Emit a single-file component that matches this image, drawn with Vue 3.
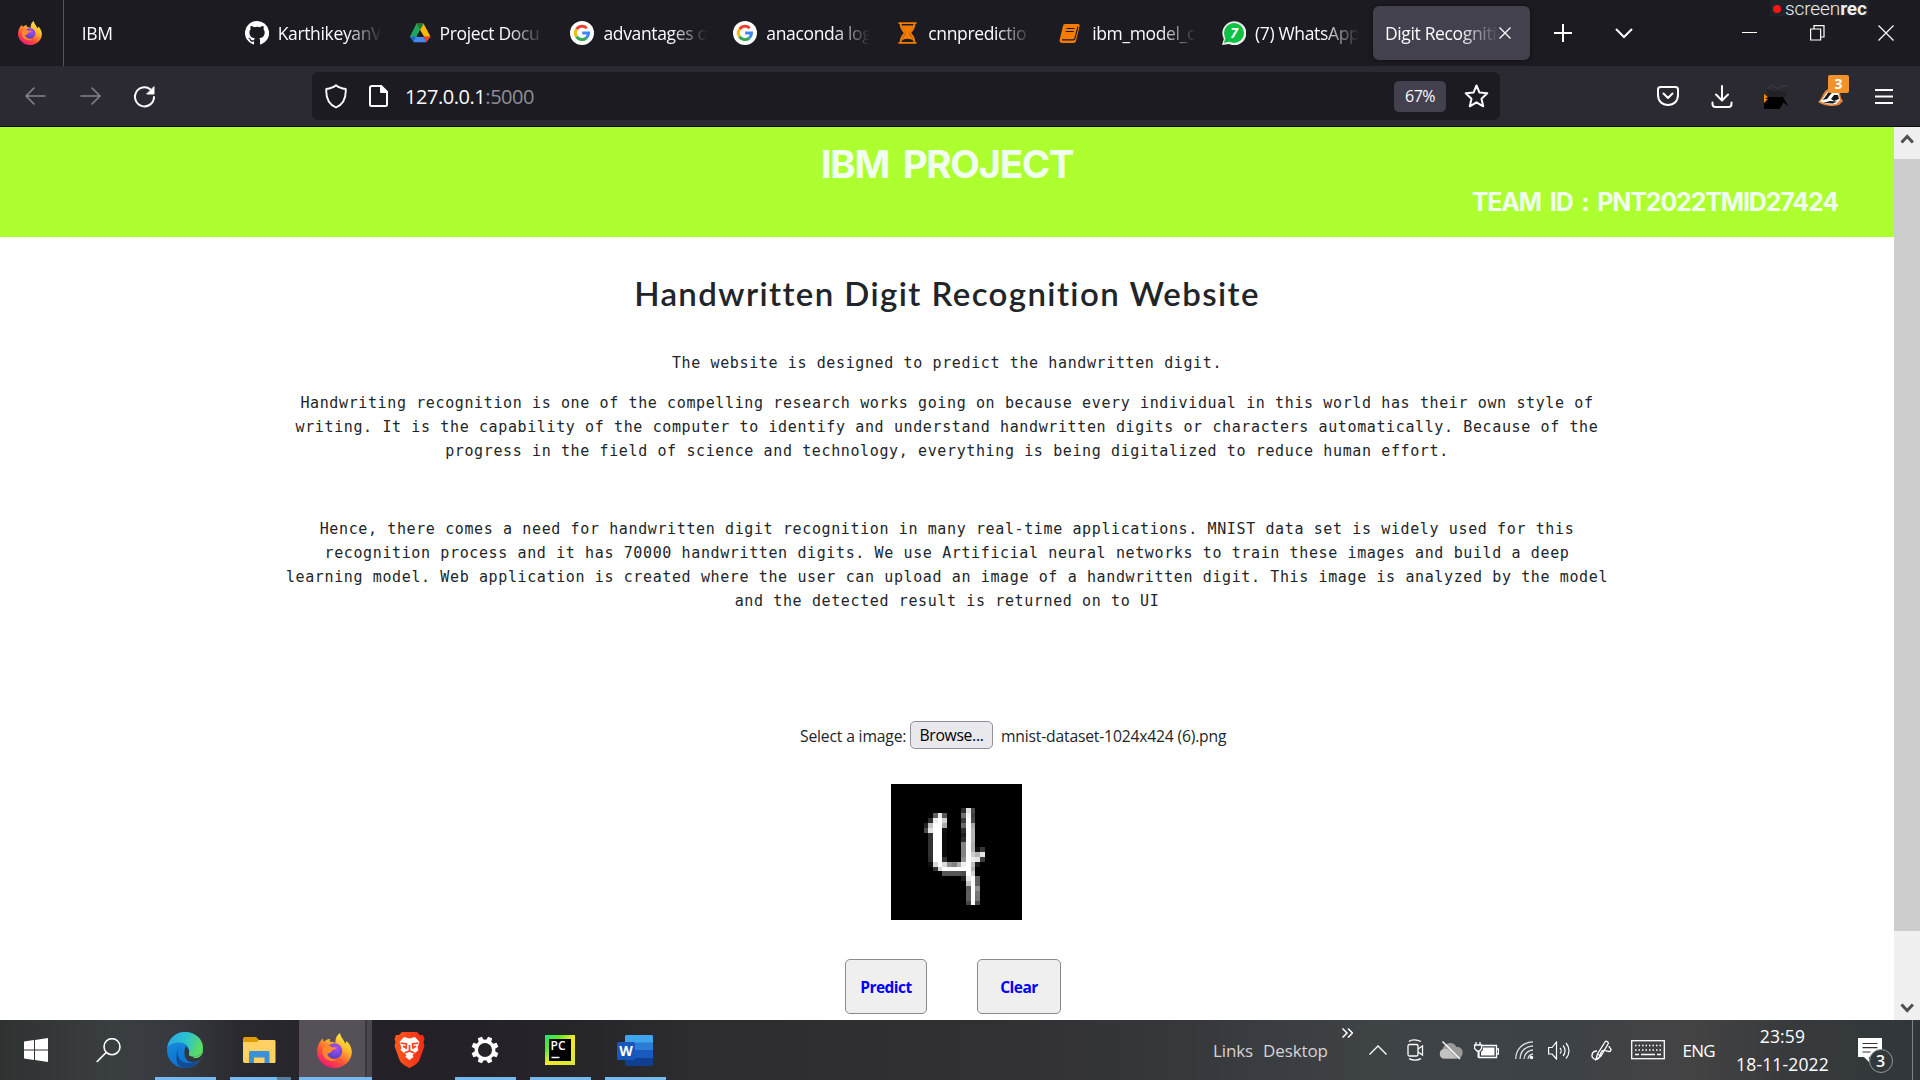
<script setup>
const tabs = [
  { icon: 'none', label: 'IBM' },
  { icon: 'github', label: 'KarthikeyanV' },
  { icon: 'drive', label: 'Project Docu' },
  { icon: 'google', label: 'advantages o' },
  { icon: 'google', label: 'anaconda log' },
  { icon: 'hourglass', label: 'cnnpredictio' },
  { icon: 'book', label: 'ibm_model_c' },
  { icon: 'whatsapp', label: '(7) WhatsApp' },
]

// Rows of the 28x28 digit: [row, first column, grey levels...]
const strokes = [
  [5, 15, 45, 225, 75],
  [6, 9, 95, 235, 90], [6, 15, 110, 245, 65],
  [7, 8, 45, 235, 255, 210], [7, 15, 60, 255, 75],
  [8, 7, 35, 195, 255, 255, 170], [8, 15, 105, 255, 165],
  [9, 7, 75, 225, 255, 255, 15], [9, 15, 45, 255, 180],
  [10, 8, 50, 255, 255, 10], [10, 15, 30, 255, 180],
  [11, 8, 50, 255, 255, 10], [11, 15, 45, 255, 180],
  [12, 8, 50, 255, 255, 10], [12, 15, 130, 255, 175],
  [13, 8, 50, 255, 255, 10], [13, 15, 130, 255, 175, 15, 55],
  [14, 8, 50, 255, 255, 10], [14, 15, 130, 255, 205, 180, 230],
  [15, 8, 45, 255, 255, 50], [15, 15, 145, 255, 235, 225, 60],
  [16, 8, 15, 215, 255, 220, 145, 130, 175, 240, 255, 190, 25],
  [17, 9, 50, 215, 255, 255, 255, 255, 255, 255, 175],
  [18, 11, 85, 85, 85, 85, 75, 255, 210],
  [19, 15, 30, 235, 255, 95],
  [20, 16, 195, 255, 95],
  [21, 16, 90, 255, 145],
  [22, 16, 95, 255, 120],
  [23, 16, 95, 255, 115],
  [24, 16, 70, 255, 75],
]
const pixels = strokes.flatMap(([y, x, ...levels]) =>
  levels.map((g, i) => ({ x: x + i, y, fill: `rgb(${g},${g},${g})` })))
</script>

<template>
  <svg width="0" height="0" class="defs">
    <defs>
      <linearGradient id="ffBody" x1=".85" y1=".05" x2=".25" y2="1">
        <stop offset="0" stop-color="#fff44f" /><stop offset=".35" stop-color="#ffb52b" />
        <stop offset=".65" stop-color="#ff5634" /><stop offset="1" stop-color="#f4107c" />
      </linearGradient>
      <radialGradient id="ffGlobe" cx=".6" cy=".3" r=".7">
        <stop offset="0" stop-color="#b74cf2" /><stop offset="1" stop-color="#4b45c8" />
      </radialGradient>
      <linearGradient id="edgeTop" x1="0" y1=".3" x2="1" y2=".6">
        <stop offset="0" stop-color="#29a8e0" /><stop offset=".5" stop-color="#2cc3cd" /><stop offset="1" stop-color="#64de55" />
      </linearGradient>
      <linearGradient id="edgeLow" x1="0" y1="0" x2=".4" y2="1">
        <stop offset="0" stop-color="#1b93df" /><stop offset="1" stop-color="#0a6fd0" />
      </linearGradient>
      <linearGradient id="braveFill"><stop offset="0" stop-color="#ff5a1c" /><stop offset="1" stop-color="#f32a17" /></linearGradient>
      <linearGradient id="pcFill" x1="0" y1="0" x2="1" y2="1">
        <stop offset="0" stop-color="#21e67b" /><stop offset=".25" stop-color="#55e82c" /><stop offset=".5" stop-color="#f2ea25" /><stop offset="1" stop-color="#d8e82f" />
      </linearGradient>
      <symbol id="firefox" viewBox="0 0 34 34">
        <path d="M3 8.5C4 7 4.7 6.100 5.700 5.400C5.600 7 6.200 7.800 7.200 8.300C9 6.700 11 6 12.500 5.700L12.300 8.300C14 8.500 16 9.200 18 9.500C17.500 5 19.500 2 22.500 0C22.500 4 26 6 27.500 10.500C28.200 9.300 28.500 8.600 28.500 7.800C32 10.500 34 15 33.800 19C33.500 27.500 26 34 17 34C8 34 .5 27.500 0 18.500C-.1 15 1 11 3 8.500Z" fill="url(#ffBody)" />
        <circle cx="17" cy="17.500" r="7.500" fill="url(#ffGlobe)" />
        <path d="M5.500 14C8 12 12 12 14.500 13.800L19 14.200C18.500 16 15.500 16.600 14.500 17C13.500 19.500 10.500 20.500 9.700 20C10 24 15 27 20 25C17 29 8 28 5.500 20Z" fill="#ff8a2b" />
      </symbol>
      <symbol id="google" viewBox="0 0 24 24">
        <circle cx="12" cy="12" r="12" fill="#fff" />
        <g fill="none" stroke-width="3">
          <path d="M6.500 8.300A6.600 6.600 0 0 1 16.700 7.200" stroke="#ea4335" />
          <path d="M6.500 15.600A6.600 6.600 0 0 1 6.500 8.300" stroke="#fbbc05" />
          <path d="M16.300 17A6.600 6.600 0 0 1 6.500 15.600" stroke="#34a853" />
          <path d="M12.200 12H18.500A6.600 6.600 0 0 1 16.300 17" stroke="#4285f4" />
        </g>
      </symbol>
    </defs>
  </svg>

  <div class="screen">
    <header class="tabstrip">
      <div class="pinned"><svg width="24" height="24"><use href="#firefox" /></svg></div>
      <div v-for="(t, i) in tabs" :key="i" class="tab" :class="t.icon">
        <svg v-if="t.icon === 'github'" class="fav" viewBox="0 0 16 16"><path fill="#fff" d="M8 0a8 8 0 0 0-2.530 15.590c.4.070.55-.17.55-.38v-1.490c-2.010.37-2.530-.49-2.690-.94-.09-.23-.48-.94-.82-1.130-.28-.15-.68-.52-.01-.53.630-.01 1.080.580 1.230.820.720 1.210 1.870.870 2.330.660.070-.52.280-.87.510-1.070-1.780-.2-3.640-.89-3.640-3.950 0-.87.310-1.590.820-2.150-.08-.2-.36-1.020.080-2.120 0 0 .67-.21 2.200.820a7.400 7.400 0 0 1 4 0c1.530-1.040 2.200-.82 2.200-.82.440 1.100.160 1.920.080 2.120.510.560.820 1.270.820 2.150 0 3.070-1.870 3.750-3.650 3.950.290.250.540.730.540 1.480v2.200c0 .21.150.460.550.380A8 8 0 0 0 8 0Z" /></svg>
        <svg v-else-if="t.icon === 'drive'" class="fav" viewBox="0 0 24 24"><path d="M8 2H16L6 22L1 16Z" fill="#1fa463" /><path d="M8 2h8l7.500 14h-7Z" fill="#fdb900" /><path d="M8 2h8l-4 7Z" fill="#188038" /><path d="M1 16h6.500L5 22Z" fill="#1967d2" /><path d="M5 22l3-6h8l3 6Z" fill="#4688f4" /><path d="M16 16h7.500L19 22Z" fill="#ea4335" /><path d="M12 9l4 7H8Z" fill="#1d1b22" /></svg>
        <svg v-else-if="t.icon === 'google'" class="fav"><use href="#google" /></svg>
        <svg v-else-if="t.icon === 'hourglass'" class="fav" viewBox="0 0 19 24" fill="none" stroke="#f57c00" stroke-width="1.800"><path d="M.5 2.200h18M.5 21.800h18M2.500 2c0 6 2 7 4.500 10C4.500 15 2.500 16 2.500 22M16.500 2c0 6-2 7-4.500 10C14.500 15 16.500 16 16.500 22" /><path d="M3.500 4.500h12c-1 4-3 5.500-4.500 7.500C12.500 15 14.500 16 15.500 20c-3-3-9-3-12 0C4.500 16 6.500 15 8 12 6.500 10 4.500 8.500 3.500 4.500Z" fill="#f57c00" stroke="none" /></svg>
        <svg v-else-if="t.icon === 'book'" class="fav" viewBox="0 0 22 24"><path d="M6 3h13c1.500 0 2 1 1.600 2.300L17 20c-.4 1.300-1 2-2.500 2H3.500c-2.500 0-3.500-1.500-2.800-3.500L4 5C4.300 3.700 4.800 3 6 3Z" fill="#f57c00" /><path d="M7.500 7.500h8M6.700 10.500h8M3 18.800h11.500c.8 0 1.200-.4 1.400-1.200L19 5.500" fill="none" stroke="#1d1b22" stroke-width="1.200" /></svg>
        <svg v-else-if="t.icon === 'whatsapp'" class="fav" viewBox="0 0 24 24"><path d="M0 24L1.800 18A12 12 0 1 1 7 23Z" fill="#eee" /><circle cx="12" cy="12" r="10" fill="#0cc143" /><path d="M2 22l1.600-5.500 4 4Z" fill="#0cc143" /><text x="12" y="17" text-anchor="middle" class="wa-count">7</text></svg>
        <span class="tab-label">{{ t.label }}</span>
      </div>
      <div class="tab active"><span class="tab-label">Digit Recogniti</span>
        <svg width="12" height="12" viewBox="0 0 12 12" fill="none" stroke="#fff" stroke-width="1.300"><path d="M.5 .5l11 11M11.500 .5l-11 11" /></svg>
      </div>
      <svg class="plus" width="18" height="18" fill="none" stroke="#fff" stroke-width="2"><path d="M9 0v18M0 9h18" /></svg>
      <svg class="list" width="18" height="11" fill="none" stroke="#fff" stroke-width="2"><path d="M1 1l8 8 8-8" /></svg>
      <svg class="minimise" width="15" height="16" stroke="#fff"><path d="M0 7.500h15" /></svg>
      <svg class="restore" width="15" height="16" fill="none" stroke="#fff" stroke-width="1.200"><path d="M.6 4h10v11H.6ZM4 4V.6h10v11.400h-3.400" /></svg>
      <svg class="close" width="16" height="16" fill="none" stroke="#fff" stroke-width="1.200"><path d="M.5 .5l15 15M15.500 .5l-15 15" /></svg>
      <div class="screenrec"><i></i><span>screen<b>rec</b></span></div>
    </header>

    <nav class="toolbar">
      <svg class="back" width="21" height="20" fill="none" stroke="#85848b" stroke-width="1.600" stroke-linecap="round" stroke-linejoin="round"><path d="M20 10H1M9 2L1 10l8 8" /></svg>
      <svg class="forward" width="21" height="20" fill="none" stroke="#85848b" stroke-width="1.600" stroke-linecap="round" stroke-linejoin="round"><path d="M1 10h19M12 2l8 8-8 8" /></svg>
      <svg class="reload" width="23" height="23" fill="none" stroke="#fbfbfe" stroke-width="2" stroke-linecap="round"><path d="M21 12A9.500 9.500 0 1 1 17.500 4.500" /><path d="M21 2v7h-7Z" fill="#fbfbfe" stroke-width="1" stroke-linejoin="round" /></svg>
      <div class="urlbar">
        <svg class="shield" width="22" height="25" fill="none" stroke="#fbfbfe" stroke-width="1.900" stroke-linejoin="round"><path d="M11 1.300C13.500 3.500 17 4.600 20.700 5C21.200 13.500 18 20.500 11 23.500C4 20.500.8 13.500 1.300 5C5 4.600 8.500 3.500 11 1.300Z" /></svg>
        <svg class="page" width="19" height="22" fill="none" stroke="#fbfbfe" stroke-width="2" stroke-linejoin="round"><path d="M3 1h9l6 6v12.500c0 1-.5 1.500-1.500 1.500H2.500C1.500 21 1 20.500 1 19.500V2.500C1 1.500 1.500 1 3 1Z" /><path d="M12 1v6h6Z" fill="#fbfbfe" /></svg>
        <span class="url">127.0.0.1<em>:5000</em></span>
        <span class="zoom">67%</span>
        <svg class="star" width="25" height="24" fill="none" stroke="#fbfbfe" stroke-width="2" stroke-linejoin="round"><path d="M12.500 1.500L15.500 8.600L23.300 9.300L17.500 14.700L19.200 22.300L12.500 18.300L5.800 22.300L7.500 14.700L1.700 9.300L9.500 8.600Z" /></svg>
      </div>
      <svg class="pocket" width="22" height="20" fill="none" stroke="#fbfbfe" stroke-width="2" stroke-linecap="round" stroke-linejoin="round"><path d="M3.500 1h15C20 1 21 2 21 3.500V9C21 15 17 19 11 19S1 15 1 9V3.500C1 2 2 1 3.500 1ZM6.500 7.500L11 12l4.500-4.500" /></svg>
      <svg class="download" width="22" height="23" fill="none" stroke="#fbfbfe" stroke-width="2" stroke-linecap="round" stroke-linejoin="round"><path d="M11 1v14M5 9.500l6 6 6-6M1.500 17.500V19c0 2 1 3 3 3h13c2 0 3-1 3-3v-1.500" /></svg>
      <svg class="ext" width="25" height="25"><path d="M0 10l5 4-5 7Z" fill="#ff8a00" /><path d="M3 5l4 2h8l8 1-3 6H4Z" fill="#222125" /><path d="M1 15l3-2h15l5.500 9.500-5-4-4 6.500H0v-6l4-4Z" fill="#000" /><path d="M4 5c5-7 8 1 11-1s5-3 8-2" stroke="#3a393f" stroke-width="1.400" fill="none" /></svg>
      <div class="badger">
        <svg width="25" height="20" viewBox="0 0 25 20"><path d="M0 16C5 12 4 6 10 3l3-3 1 4c4-1 7 0 8 3l1 5 2 3-4 4c-7 2-15 1-21-3Z" fill="#e98532" /><path d="M2 15C7 12 6 8 11 5c5-2 9 0 10 4l1 5-4 4c-6 1-11 0-16-3Z" fill="#fff" /><path d="M4 14c3-1 4-6 8-9l3 1c-3 2-4 5-6 7Zm9-1l3-4 4 0 1 4-5 2Zm-8 4l7-2 7 .5-4 2Z" fill="#171717" /></svg>
        <b>3</b>
      </div>
      <svg class="menu" width="18" height="17" stroke="#fbfbfe" stroke-width="2"><path d="M0 2h18M0 8.500h18M0 15h18" /></svg>
    </nav>

    <div class="viewport">
      <main>
        <section class="banner"><h1>IBM PROJECT</h1><h4>TEAM ID : PNT2022TMID27424</h4></section>
        <h2>Handwritten Digit Recognition Website</h2>
        <p class="lead">The website is designed to predict the handwritten digit.</p>
        <p class="first">Handwriting recognition is one of the compelling research works going on because every individual in this world has their own style of<br>writing. It is the capability of the computer to identify and understand handwritten digits or characters automatically. Because of the<br>progress in the field of science and technology, everything is being digitalized to reduce human effort.</p>
        <p class="second">Hence, there comes a need for handwritten digit recognition in many real-time applications. MNIST data set is widely used for this<br>recognition process and it has 70000 handwritten digits. We use Artificial neural networks to train these images and build a deep<br>learning model. Web application is created where the user can upload an image of a handwritten digit. This image is analyzed by the model<br>and the detected result is returned on to UI</p>
        <div class="picker"><span class="pick-label">Select a image:</span><button class="browse"><span>Browse...</span></button><span class="filename">mnist-dataset-1024x424 (6).png</span></div>
        <svg class="digit" width="131" height="136" viewBox="0 0 28 28" preserveAspectRatio="none" shape-rendering="crispEdges">
          <rect width="28" height="28" fill="#000" />
          <rect v-for="p in pixels" :key="p.x + '-' + p.y" :x="p.x" :y="p.y" width="1" height="1" :fill="p.fill" />
        </svg>
        <div class="actions"><button class="predict">Predict</button><button class="clear">Clear</button></div>
      </main>
      <aside class="scrollbar">
        <svg width="26" height="32" fill="none" stroke="#505050" stroke-width="3"><path d="M7.500 15.500l5.700-6 5.700 6" /></svg>
        <div class="thumb"></div>
        <svg width="26" height="30" fill="none" stroke="#505050" stroke-width="3"><path d="M7.500 14.500l5.700 6 5.700-6" /></svg>
      </aside>
    </div>

    <footer class="taskbar">
      <div class="slot start"><svg width="24" height="24" fill="#fff"><path d="M0 3.500l10-1.400v9.300H0ZM11 2l13-2v11.400H11ZM0 12.400h10v9.500L0 20.500ZM11 12.400h13V24l-13-1.900Z" /></svg></div>
      <div class="slot search"><svg width="25" height="25" fill="none" stroke="#fff" stroke-width="1.600"><circle cx="16" cy="8.700" r="8" /><path d="M10.300 14.400L.7 24" /></svg></div>
      <div class="slot run">
        <svg width="36" height="36"><circle cx="18" cy="18" r="18" fill="url(#edgeLow)" /><path d="M0 16C2 6 9 0 18 0c10 0 18 7 18 15.500C36 21 32 24.500 27 24.500c-3.500 0-5.500-1.500-5-3 2-6-3-11-9.500-11C7 10.500 2 12 0 16Z" fill="url(#edgeTop)" /><path d="M13 15c-5 6-1 16 8 16 5 0 9-2 12-4.500-4 6-9 9.500-15 9.500-7 0-9-6-8.500-12 .3-4 1.500-7 3.500-9Z" fill="#104c96" /><path d="M22 21.500c-.7 1.600 1 3.300 5 3.300 4 0 7-1.500 9-4.300L36 26l-2 1c-2.500 2-6 3.300-9.500 3C18 29.500 16 22 18.500 14.500 21 16 22.800 18.600 22 21.500Z" fill="#33363b" /><path d="M22 21.500c-.7 1.600 1 3 5 3 5 0 8.500-3 9-8l0 3c-1 5-5 7-9 6.500Z" fill="#5fd65c" /></svg>
      </div>
      <div class="slot run multi"><svg width="33" height="28"><path d="M0 3C0 1.500 1 1 2 1h11l3 3v5H0Z" fill="#df9b02" /><path d="M0 6h14l2-2h15c1 0 1.500.5 1.500 1.500v20c0 1-.5 1.500-1.500 1.500H2C.7 27 0 26.300 0 25Z" fill="#ffd162" /><path d="M6 27V17c0-1.500.7-2 2-2h16.500c1.300 0 2 .5 2 2v10h-5v-5.500H11V27Z" fill="#3a91d8" /></svg></div>
      <div class="slot run focus"><svg width="35" height="35"><use href="#firefox" /></svg></div>
      <div class="slot"><svg width="31" height="36" viewBox="0 0 31 36"><path d="M8 0h15l3 3h3l1.500 4-1 3 1 4-5 14c-1 3-6 6-10 8-4-2-9-5-10-8L.5 14l1-4-1-3L2 3h3Z" fill="url(#braveFill)" /><path d="M15.500 6.500L21 5l4.500 5-2 6 1 2-6 5 1 2-4 3-4-3 1-2-6-5 1-2-2-6L10 5Z" fill="#fff" /><path d="M6.500 11l6 1-.5 4-3-2M24.500 11l-6 1 .5 4 3-2M10.500 21l5-2 5 2M15.500 13v6" stroke="#f9411b" stroke-width="1.700" fill="none" /></svg></div>
      <div class="slot run"><svg width="28" height="28" viewBox="-14 -14 28 28"><circle r="8.700" fill="none" stroke="#fff" stroke-width="3.400" /><path v-for="n in 8" :key="n" d="M-2.800 -9L-2.200 -13.500H2.200L2.800 -9Z" fill="#fff" :transform="`rotate(${n * 45 - 22.5})`" /></svg></div>
      <div class="slot run"><svg width="30" height="30"><rect width="30" height="30" fill="url(#pcFill)" /><rect x="4" y="4" width="22" height="22" fill="#000" /><text x="5.500" y="15" class="pc">PC</text><path d="M6.500 22.500h8" stroke="#fff" stroke-width="1.500" /></svg></div>
      <div class="slot run"><svg width="36" height="33"><rect x="8" y="1" width="28" height="31" rx="2" fill="#103f91" /><path d="M8 24V3c0-1.300.7-2 2-2h24c1.300 0 2 .7 2 2v21Z" fill="#185abd" /><path d="M8 16V3c0-1.300.7-2 2-2h24c1.300 0 2 .7 2 2v13Z" fill="#2b7cd3" /><path d="M8 8.500V3c0-1.300.7-2 2-2h24c1.300 0 2 .7 2 2v5.500Z" fill="#41a5ee" /><rect y="8" width="18" height="18" rx="1.500" fill="#1856ba" /><text x="9" y="21.500" text-anchor="middle" class="word">W</text></svg></div>
      <div class="tray">
        <span class="links">Links</span><span class="desktop">Desktop</span>
        <svg class="more" width="11" height="10" fill="none" stroke="#fff" stroke-width="1.500"><path d="M.5 .5L5 5 .5 9.500M6 .5L10.500 5 6 9.500" /></svg>
        <svg class="up" width="18" height="10" fill="none" stroke="#fff" stroke-width="1.400"><path d="M.5 9.500L9 1l8.500 8.500" /></svg>
        <svg class="meet" width="17" height="22" fill="none" stroke="#fff" stroke-width="1.300"><rect x="1" y="5.500" width="10" height="11.500" rx="1.500" /><path d="M11 10l4.500-3v9L11 13M2 2.500C4 .3 10 .3 14 2.500M2 19.700c4 2 8 2 12 0" /></svg>
        <svg class="cloud" width="25" height="19"><path d="M5 17.500a5 5 0 0 1-.5-9C6 2 15-1 18.500 6c5-.5 7.500 4 5.500 8.500-1 2-2 3-4 3Z" fill="#999" /><path d="M5 17.500a5 5 0 0 1 .5-9.500c3-1 7 1.500 8 4l6 5.500Z" fill="#c2c2c2" /><path d="M4.500 .5L22 18" stroke="#fff" stroke-width="1.400" /></svg>
        <svg class="battery" width="25" height="17" fill="none" stroke="#fff" stroke-width="1.300"><path d="M5 10v5.500h17.500V3.500H8M23 7h1.500v5H23M2 0v3M6 0v3M.6 3h7v3.500L5.500 9H3L.6 6.500ZM4.200 9v6.500" /><path d="M9 5.500h11.500v8H7V10l2-2Z" fill="#fff" stroke="none" /></svg>
        <svg class="wifi" width="19" height="19" fill="none" stroke="#ddd" stroke-width="1.300"><path d="M.7 18C1 8 8 1 18 .8M5 18C5.500 10.500 10 5.500 18 5M9 18c.5-5 4-8.500 9-9M13 18c.3-2.500 2-4.500 5-5" /><circle cx="16.500" cy="16.500" r="1.800" fill="#fff" stroke="none" /></svg>
        <svg class="speaker" width="23" height="19" fill="none" stroke="#fff" stroke-width="1.200"><path d="M.6 6.500h3.500L8.500 1v17L4.100 13H.6ZM12 7c1.500 1.500 1.500 4 0 5.500M15 4.500c2.700 3 2.700 7.500 0 10.500M18 2c4 4.500 4 11 0 15.500" /></svg>
        <svg class="pen" width="21" height="21" fill="none" stroke="#fff" stroke-width="1.300"><path d="M5 19.500L6.500 14 14 2c1-1.500 4-.5 3 2L10 16ZM6.500 14l3.500 2M6 11c-6 0-7 8-1 8.500 5 0 3-5 6-8.500 2-2.500 8 3 9-1 .3-2-2-2-2-4" /></svg>
        <svg class="keyboard" width="34" height="20" fill="none" stroke="#fff" stroke-width="1.300"><rect x=".7" y=".7" width="32.600" height="18" /><path d="M4 5.500h27M4 10h27" stroke-dasharray="1.500 2" /><path d="M4 14.500h4M10 14.500h14M26 14.500h4" /></svg>
        <span class="lang">ENG</span>
        <div class="clock"><span class="time">23:59</span><span class="date">18-11-2022</span></div>
        <div class="notify"><svg width="24" height="25"><path d="M0 0h24v19H11v5l-5-5H0Z" fill="#fff" /><path d="M4.500 5.500h15M4.500 9.700h15M4.500 14h8" stroke="#333" stroke-width="1.200" /></svg><b>3</b></div>
        <div class="peek"></div>
      </div>
    </footer>
  </div>
</template>

<style>
body { margin: 0; overflow: hidden; }
</style>

<style scoped>
.defs { position: absolute; }
.screen { width: 1920px; height: 1080px; display: flex; flex-direction: column; overflow: hidden; background: #fff; font-family: "Open Sans", "Noto Sans", sans-serif; }
svg { display: block; flex: none; }
span { white-space: nowrap; }
button { font: inherit; padding: 0; box-sizing: border-box; }

.tabstrip { height: 66px; flex: none; display: flex; align-items: center; background: #1d1b22; color: #fbfbfe; position: relative; }
.pinned { width: 64px; height: 66px; border-right: 1px solid #55545b; display: flex; align-items: center; padding-left: 18px; box-sizing: border-box; }
.tab { width: 162.900px; height: 54px; flex: none; box-sizing: border-box; display: flex; align-items: center; padding-left: 17.800px; }
.fav { width: 24px; height: 24px; margin-right: 9px; }
.tab.drive .fav, .tab.book .fav { width: 22px; }
.tab.book .fav { margin-right: 11px; }
.tab.hourglass .fav { width: 19px; margin-left: 2px; margin-right: 11px; }
.tab.drive .fav { margin-left: 1px; }
.tab-label { width: 103px; font-size: 17.500px; letter-spacing: -0.350px; overflow: hidden; line-height: 28px; -webkit-mask-image: linear-gradient(90deg, #000 66%, transparent 101%); mask-image: linear-gradient(90deg, #000 66%, transparent 101%); }
.wa-count { font: italic bold 14px "Open Sans", sans-serif; fill: #fff; }
.tab.active { width: 157px; background: #42414d; border-radius: 6px; margin-left: 5.800px; padding-left: 12px; box-shadow: 0 0 4px #0008; }
.active .tab-label { width: 113px; margin-right: 1px; }
.plus { margin-left: 24px; }
.list { margin-left: 43px; }
.minimise { margin-left: 109px; }
.restore { margin-left: 53.500px; }
.close { margin-left: 53px; }
.screenrec { position: absolute; left: 1770px; top: 0; width: 99px; height: 16px; background: #20242a; display: flex; align-items: center; font: 300 19px/15px Roboto, sans-serif; color: #eee; letter-spacing: -0.100px; }
.screenrec i { width: 8px; height: 8px; flex: none; border-radius: 50%; background: #ff1414; margin: 1px 4px 0 3px; }
.screenrec b { font-weight: 700; }

.toolbar { height: 60px; flex: none; display: flex; align-items: center; background: #2b2a33; border-bottom: 1px solid #0c0c0d; color: #fbfbfe; }
.back { margin-left: 25px; }
.forward { margin-left: 34px; }
.reload { margin-left: 32px; }
.urlbar { width: 1188px; height: 48px; margin-left: 156px; background: #1c1b22; border-radius: 6px; display: flex; align-items: center; }
.shield { margin-left: 13px; }
.page { margin-left: 22px; }
.url { margin-left: 17px; width: 989px; font-size: 20px; letter-spacing: -0.450px; }
.url em { font-style: normal; color: #8f8e95; }
.zoom { width: 52px; height: 31px; line-height: 31px; border-radius: 5px; background: #42414d; text-align: center; font-size: 16px; letter-spacing: -0.500px; }
.star { margin-left: 18px; }
.pocket { margin-left: 157px; }
.download { margin-left: 32px; }
.ext { margin-left: 31px; }
.badger { margin-left: 29px; position: relative; }
.badger b { position: absolute; left: 10px; top: -11px; width: 21px; height: 18px; border-radius: 2px; background: #f0932b; font-size: 14px; line-height: 18px; text-align: center; }
.menu { margin-left: 32px; }

.viewport { height: 893px; flex: none; display: flex; overflow: hidden; }
main { width: 1894px; display: flex; flex-direction: column; align-items: center; color: #212529; }
.banner { width: 100%; height: 110px; flex: none; background: #adff2f; color: #f0fff0; display: flex; flex-direction: column; align-items: center; font-family: Inter, sans-serif; }
h1, h2, h4, p { margin: 0; white-space: nowrap; }
h1 { margin-top: 13px; font-size: 38.500px; line-height: 48px; font-weight: 700; letter-spacing: -1.350px; word-spacing: 6px; }
h4 { align-self: flex-end; margin: 0 56px 0 0; font-size: 25px; line-height: 29px; font-weight: 700; letter-spacing: -1.150px; word-spacing: 4px; }
h2 { margin-top: 36px; font: 600 33px/40px Lato, sans-serif; letter-spacing: 1.400px; }
p { font: 15px/24px "DejaVu Sans Mono", monospace; letter-spacing: 0.620px; text-align: center; }
.lead { margin-top: 38px; }
.first { margin-top: 16px; }
.second { margin-top: 54px; }
.picker { width: 1094px; margin-top: 108px; height: 28px; display: flex; align-items: center; align-self: flex-start; padding-left: 800px; font-size: 15.700px; box-sizing: content-box; }
.pick-label { width: 110px; padding-top: 2px; letter-spacing: -0.170px; }
.browse { width: 83px; height: 28px; flex: none; border: 1px solid #8f8f9d; border-radius: 5px; background: #e9e9ed; color: #000; line-height: 26px; letter-spacing: -0.300px; }
.filename { margin-left: 8px; padding-top: 2px; letter-spacing: -0.190px; }
.digit { margin: 35px 0 0 18px; }
.actions { align-self: flex-start; margin: 39px 0 0 845px; display: flex; gap: 50px; }
.actions button { width: 82px; height: 55px; border: 1px solid #8a8a8a; border-radius: 5px; background: #efefef; color: #00f; font-size: 15.500px; font-weight: 700; letter-spacing: -0.550px; padding-top: 1px; }
.actions .clear { width: 84px; }
.scrollbar { width: 26px; background: #f0f0f0; display: flex; flex-direction: column; justify-content: space-between; }
.thumb { flex: none; height: 772px; background: #cdcdcd; margin-bottom: auto; }

.taskbar { height: 60px; flex: none; display: flex; color: #fff; background: linear-gradient(90deg, #2f3231 0, #393e40 110px, #363a3f 180px, #2a2930 240px, #232027 400px, #252429 560px, #2d2c2e 700px, #302f32 950px, #36383c 1190px, #3e4346 1370px, #3c4246 1560px, #444344 1690px, #363a3c 1800px, #30363a 1920px); }
.slot { width: 75px; flex: none; display: flex; align-items: center; justify-content: center; box-sizing: border-box; background-repeat: no-repeat; background-position: 7.500px 57px; }
.start { width: 72px; }
.search { padding-right: 2px; }
.run { background-image: linear-gradient(#76b9ed, #76b9ed); background-size: 61px 3px; }
.multi { background-image: linear-gradient(90deg, #76b9ed 47px, #557d9d 47px); }
.focus { background-image: linear-gradient(90deg, #76b9ed 73px, #6aa5d4 73px), linear-gradient(90deg, #565158 66px, #3b373d 66px, #3b373d 68px, #4a464c 68px); background-size: 73px 3px, 73px 60px; background-position: 2px 57px, 2px 0; }
.pc { font: 600 12px "Open Sans", sans-serif; fill: #fff; }
.word { font: 700 14px "Open Sans", sans-serif; fill: #fff; }
.tray { margin-left: 541px; display: flex; align-items: center; }
.links, .desktop, .lang { font-size: 17px; letter-spacing: -0.100px; color: #d4d4d4; }
.links { width: 50px; }
.desktop { width: 78.500px; }
.more { margin-top: -34px; }
.up { margin-left: 16px; }
.meet { margin-left: 20px; }
.cloud { margin-left: 14px; }
.battery { margin-left: 11px; }
.wifi { margin-left: 16px; }
.speaker { margin-left: 14px; }
.pen { margin-left: 20px; }
.keyboard { margin-left: 19px; }
.lang { margin-left: 18px; width: 34px; color: #fff; letter-spacing: -0.800px; }
.clock { margin-left: 11px; width: 110px; display: flex; flex-direction: column; align-items: center; font-size: 17.500px; line-height: 28px; letter-spacing: 0.150px; }
.notify { position: relative; margin-left: 20px; }
.notify b { position: absolute; left: 11px; top: 11px; width: 22px; height: 22px; border: 1px solid #94979a; border-radius: 50%; background: #33383a; text-align: center; font: 600 16px/22px "Open Sans", sans-serif; }
.peek { width: 1px; height: 60px; margin-left: 30px; background: #808284; }
</style>
